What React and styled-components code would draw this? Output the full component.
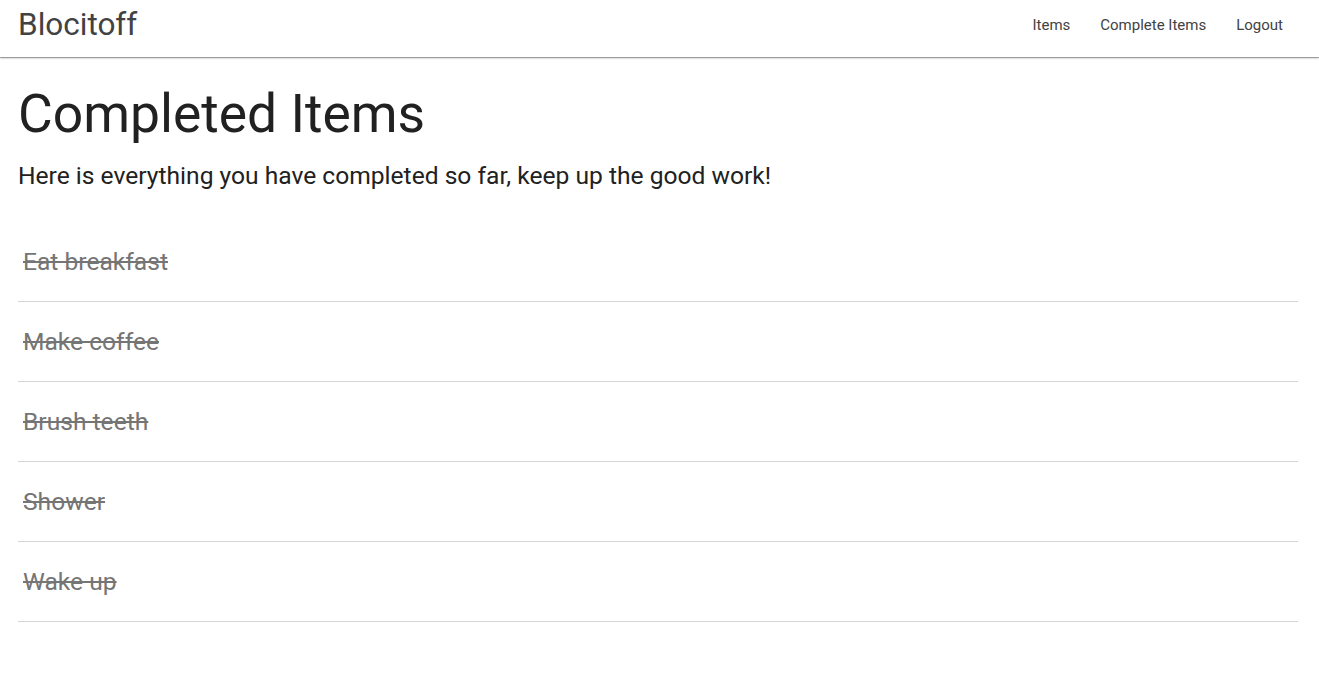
import React from "react";
import styled, { createGlobalStyle } from "styled-components";

const Global = createGlobalStyle`
  html, body { margin: 0; padding: 0; background: #fff; }
  body { font-family: Roboto, "Noto Sans", sans-serif; color: #212121; }
`;

const NavBar = styled.nav`
  height: 57px;
  display: flex;
  align-items: center;
  justify-content: space-between;
  padding: 0 21px 0 18px;
  background: #fff;
  box-shadow: 0 1px 2px rgba(0,0,0,0.35), 0 1px 0 rgba(0,0,0,0.2);
  position: relative;
`;

const Brand = styled.a`
  font-size: 31.5px;
  color: #424242;
  text-decoration: none;
  line-height: 1;
  margin-top: -8px;
`;

const NavLinks = styled.ul`
  display: flex;
  list-style: none;
  margin: 0;
  padding: 0;
  margin-top: -8px;
`;

const NavLink = styled.a`
  display: block;
  padding: 0 15px;
  font-size: 15px;
  color: #424242;
  text-decoration: none;
`;

const Main = styled.main`
  padding: 0 21px 0 18px;
`;

const Title = styled.h1`
  font-size: 53.4px;
  font-weight: 400;
  margin: 25px 0 0;
  line-height: 1.2;
  color: #212121;
`;

const Lead = styled.p`
  font-size: 24.6px;
  margin: 14px 0 0;
  line-height: 1.3;
  color: #212121;
`;

const List = styled.ul`
  list-style: none;
  margin: 30px 0 0;
  padding: 0;
`;

const Row = styled.li`
  height: 79px;
  display: flex;
  align-items: center;
  padding: 0 5px;
  border-bottom: 1px solid #d4d4d4;
`;

const Done = styled.span`
  font-size: 24.6px;
  color: #757575;
  text-decoration: line-through;
`;

const items = ["Eat breakfast", "Make coffee", "Brush teeth", "Shower", "Wake up"];

export default function App() {
  return (
    <>
      <Global />
      <NavBar>
        <Brand href="#">Blocitoff</Brand>
        <NavLinks>
          <li><NavLink href="#">Items</NavLink></li>
          <li><NavLink href="#">Complete Items</NavLink></li>
          <li><NavLink href="#">Logout</NavLink></li>
        </NavLinks>
      </NavBar>
      <Main>
        <Title>Completed Items</Title>
        <Lead>Here is everything you have completed so far, keep up the good work!</Lead>
        <List>
          {items.map((t) => (
            <Row key={t}><Done>{t}</Done></Row>
          ))}
        </List>
      </Main>
    </>
  );
}
